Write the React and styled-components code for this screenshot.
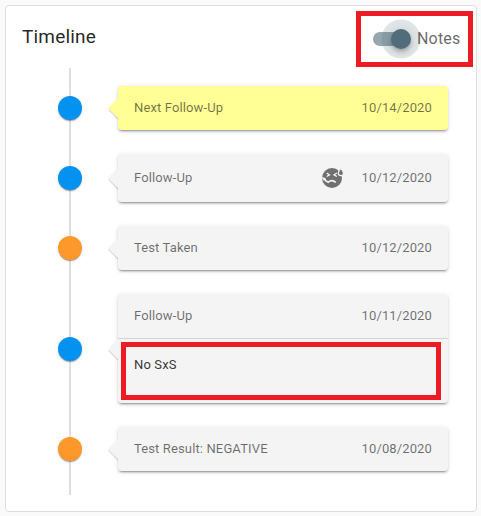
import React from "react";
import styled, { createGlobalStyle } from "styled-components";

const GlobalStyle = createGlobalStyle`
  * { box-sizing: border-box; }
  body {
    margin: 0;
    background: #fafafa;
    font-family: Roboto, "Liberation Sans", sans-serif;
    overflow: hidden;
  }
`;

const Page = styled.main`
  width: 481px;
  height: 516px;
  padding: 5px 4px 4px 5px;
`;

const Panel = styled.section`
  height: 507px;
  background: #fff;
  border: 1px solid #dedede;
  border-radius: 4px;
`;

const Header = styled.header`
  display: flex;
  justify-content: space-between;
  height: 62px;
  padding: 5px 3px 0 16px;
`;

const Title = styled.h2`
  margin: 10px 0 0;
  font-size: 19px;
  font-weight: 450;
  line-height: 32px;
  letter-spacing: 0.18px;
  color: rgba(0, 0, 0, 0.87);
`;

const NotesToggle = styled.label`
  display: flex;
  align-items: center;
  width: 117px;
  height: 56px;
  padding: 0 0 1px 12px;
  border: 5px solid #ed1c24;
  font-size: 16px;
  letter-spacing: 0.2px;
  color: rgba(0, 0, 0, 0.6);
`;

const Track = styled.span`
  display: flex;
  align-items: center;
  justify-content: flex-end;
  width: 36px;
  height: 14px;
  margin-right: 8px;
  border-radius: 7px;
  background: rgba(80, 109, 121, 0.6);
`;

const Thumb = styled.span`
  flex: none;
  width: 20px;
  height: 20px;
  margin-right: -2px;
  border-radius: 50%;
  background: #506d79;
  box-shadow: 0 0 0 9.5px rgba(80, 109, 121, 0.18), 0 2px 4px -1px rgba(0, 0, 0, 0.2),
    0 4px 5px rgba(0, 0, 0, 0.14), 0 1px 10px rgba(0, 0, 0, 0.12);
`;

const TimelineList = styled.ol`
  display: flex;
  flex-direction: column;
  gap: 24px;
  margin: 0 28px 0 52px;
  padding: 18px 0 24px;
  list-style: none;
  background: linear-gradient(#dfdfdf, #dfdfdf) 11px 0 / 2px 100% no-repeat;
`;

const Entry = styled.li`
  display: grid;
  grid-template-columns: 24px 330px;
  column-gap: 36px;
  align-items: center;
`;

const Dot = styled.span`
  width: 24px;
  height: 24px;
  border-radius: 50%;
  background: ${(p) => p.$color};
  box-shadow: 0 2px 1px -1px rgba(0, 0, 0, 0.2), 0 1px 1px rgba(0, 0, 0, 0.14),
    0 1px 3px rgba(0, 0, 0, 0.12);
`;

const Card = styled.article`
  position: relative;
  height: ${(p) => p.$height}px;
  border-radius: 4px;
  background: ${(p) => p.$fill};
  box-shadow: 0 3px 1px -2px rgba(0, 0, 0, 0.2), 0 2px 2px rgba(0, 0, 0, 0.14),
    0 1px 5px rgba(0, 0, 0, 0.12);

  &::before,
  &::after {
    content: "";
    position: absolute;
    top: calc(50% - 10px);
    left: -10px;
    border: 10px solid transparent;
    border-left: 0;
    border-right-color: ${(p) => p.$fill};
  }

  &::before {
    margin-top: 2px;
    border-right-color: rgba(0, 0, 0, 0.12);
  }
`;

const CardRow = styled.div`
  display: flex;
  align-items: center;
  height: ${(p) => p.$height}px;
  padding: 0 16px 2px;
  font-size: 13px;
  letter-spacing: 0.13px;
  color: rgba(0, 0, 0, 0.56);
`;

const Label = styled.span`
  flex: 1;
`;

const MoodIcon = styled.svg`
  width: 24px;
  height: 24px;
  margin: 2px 18px 0 0;
  fill: #707070;
`;

const Note = styled.div`
  height: 65px;
  border-top: 1px solid #d4d4d4;
`;

const NoteFrame = styled.div`
  width: 320px;
  height: 58px;
  margin: 3px 0 0 3px;
  padding: 9px 8px;
  border: 5px solid #ed1c24;
  font-size: 13px;
  line-height: 17px;
  letter-spacing: 0.13px;
  color: rgba(0, 0, 0, 0.8);
`;

const BLUE = "#0492f0";
const ORANGE = "#ff982b";

const entries = [
  { label: "Next Follow-Up", date: "10/14/2020", color: BLUE, fill: "#ffff96" },
  { label: "Follow-Up", date: "10/12/2020", color: BLUE, rowHeight: 48, sick: true },
  { label: "Test Taken", date: "10/12/2020", color: ORANGE },
  { label: "Follow-Up", date: "10/11/2020", color: BLUE, note: "No SxS" },
  { label: "Test Result: NEGATIVE", date: "10/08/2020", color: ORANGE },
];

function SickFace() {
  return (
    <MoodIcon viewBox="0 0 24 24" aria-hidden="true">
      <circle cx="12" cy="12" r="10" />
      <path
        d="M20.8 2.2C19 4.6 18.3 5.7 18.3 7a2.6 2.6 0 0 0 5.2 0c0-1.3-.9-2.4-2.7-4.8z"
        stroke="#f4f4f4"
        strokeWidth="1.2"
      />
      <g fill="none" stroke="#f4f4f4" strokeWidth="1.3">
        <path d="M6.7 7 9.5 8.9 6.7 10.5M16.8 7 14 8.9 16.8 10.5" />
        <path d="M2 11.7 4.7 12.6 5.6 14.8 8.3 16.2Q12 13 15.8 16.4" strokeWidth="1.6" />
      </g>
      <circle cx="4.3" cy="13.4" r="1.2" fill="#f4f4f4" />
    </MoodIcon>
  );
}

function TimelineEntry({ label, date, color, fill = "#f4f4f4", rowHeight = 44, sick, note }) {
  return (
    <Entry>
      <Dot $color={color} />
      <Card $fill={fill} $height={note ? 109 : rowHeight}>
        <CardRow $height={rowHeight}>
          <Label>{label}</Label>
          {sick && <SickFace />}
          <time>{date}</time>
        </CardRow>
        {note && (
          <Note>
            <NoteFrame>{note}</NoteFrame>
          </Note>
        )}
      </Card>
    </Entry>
  );
}

export default function App() {
  return (
    <Page>
      <GlobalStyle />
      <Panel>
        <Header>
          <Title>Timeline</Title>
          <NotesToggle>
            <Track>
              <Thumb />
            </Track>
            Notes
          </NotesToggle>
        </Header>
        <TimelineList>
          {entries.map((entry) => (
            <TimelineEntry key={entry.date + entry.label} {...entry} />
          ))}
        </TimelineList>
      </Panel>
    </Page>
  );
}
